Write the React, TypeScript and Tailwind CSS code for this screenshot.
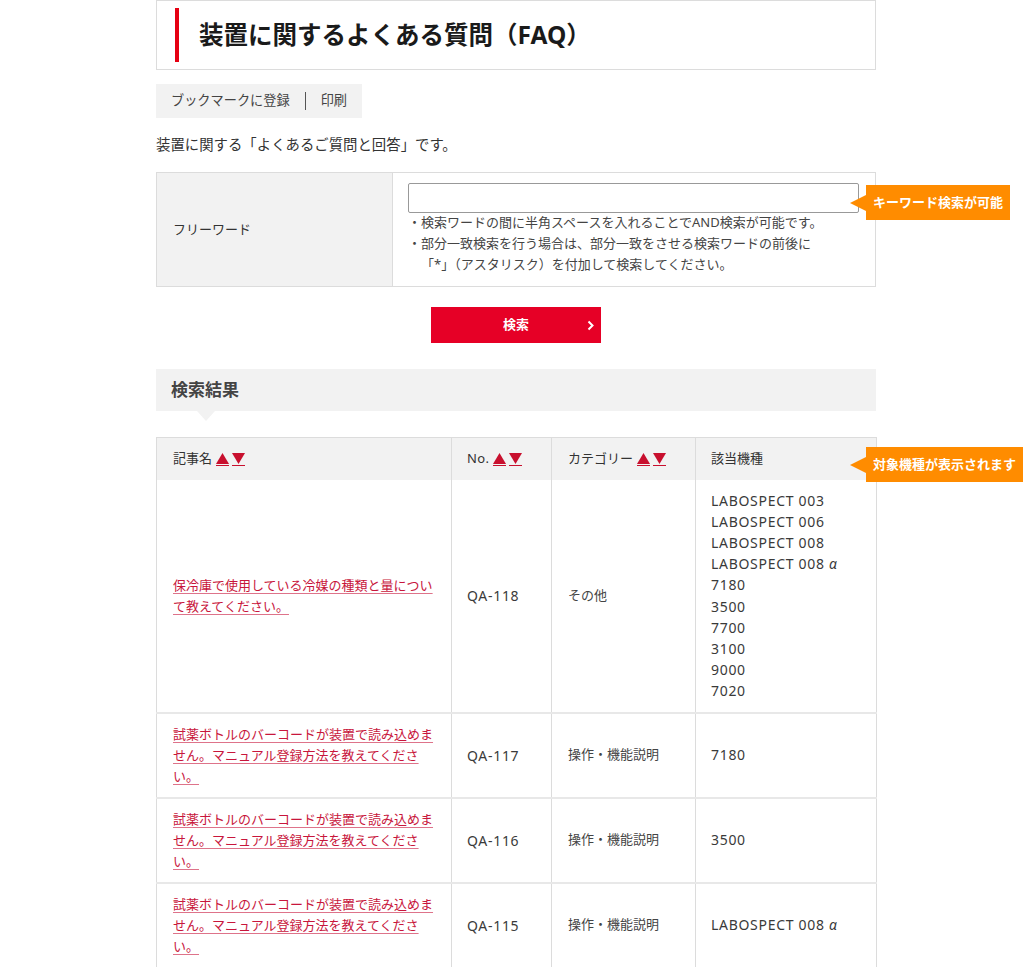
import React from 'react'

const rows = [
  {
    title: '保冷庫で使用している冷媒の種類と量について教えてください。',
    no: 'QA-118',
    category: 'その他',
    models: [
      'LABOSPECT 003',
      'LABOSPECT 006',
      'LABOSPECT 008',
      'LABOSPECT 008 α',
      '7180',
      '3500',
      '7700',
      '3100',
      '9000',
      '7020',
    ],
  },
  {
    title: '試薬ボトルのバーコードが装置で読み込めません。マニュアル登録方法を教えてください。',
    no: 'QA-117',
    category: '操作・機能説明',
    models: ['7180'],
  },
  {
    title: '試薬ボトルのバーコードが装置で読み込めません。マニュアル登録方法を教えてください。',
    no: 'QA-116',
    category: '操作・機能説明',
    models: ['3500'],
  },
  {
    title: '試薬ボトルのバーコードが装置で読み込めません。マニュアル登録方法を教えてください。',
    no: 'QA-115',
    category: '操作・機能説明',
    models: ['LABOSPECT 008 α'],
  },
]

function SortArrows() {
  return (
    <span className="ml-1 inline-flex items-end gap-[3px] align-middle">
      <a href="#" className="inline-flex flex-col items-center">
        <svg width="13" height="11" viewBox="0 0 13 11">
          <polygon points="6.5,0 13,11 0,11" fill="#c8102e" />
        </svg>
        <span className="mt-[1px] block h-[1px] w-[13px] bg-[#c8102e]" />
      </a>
      <a href="#" className="inline-flex flex-col items-center">
        <svg width="13" height="11" viewBox="0 0 13 11">
          <polygon points="0,0 13,0 6.5,11" fill="#c8102e" />
        </svg>
        <span className="mt-[1px] block h-[1px] w-[13px] bg-[#c8102e]" />
      </a>
    </span>
  )
}

function Callout({ text, className }: { text: string; className: string }) {
  return (
    <div className={`absolute flex items-center ${className}`}>
      <span className="h-0 w-0 border-y-[8px] border-r-[16px] border-y-transparent border-r-[#ff8c00]" />
      <span className="flex h-[35px] items-center whitespace-nowrap bg-[#ff8c00] px-[7px] text-[13px] font-bold text-white">
        {text}
      </span>
    </div>
  )
}

// model names: italic alpha like the original
function Model({ name }: { name: string }) {
  if (name.endsWith('α')) {
    return (
      <div>
        {name.slice(0, -1)}
        <span className="italic">α</span>
      </div>
    )
  }
  return <div>{name}</div>
}

function App() {
  return (
    <div
      className="min-h-[967px] bg-white text-[#333]"
      style={{ fontFamily: '"Noto Sans", "Noto Sans CJK JP", sans-serif' }}
    >
      <div className="relative mx-auto w-[720px]">
        {/* page title */}
        <div className="flex h-[70px] items-center border border-[#dcdcdc] pl-[18px]">
          <span className="h-[54px] w-[4px] bg-[#e60012]" />
          <h1 className="ml-[20px] text-[24.5px] font-bold leading-none text-[#1a1a1a]">
            装置に関するよくある質問（FAQ）
          </h1>
        </div>

        {/* utility links */}
        <div className="mt-[14px] inline-flex h-[34px] items-center bg-[#f2f2f2] px-[15px] text-[13.2px] text-[#444]">
          <a href="#">ブックマークに登録</a>
          <span className="mx-[15px] h-[18px] w-px bg-[#555]" />
          <a href="#">印刷</a>
        </div>

        <p className="mt-[17px] text-[14.4px] leading-[20px]">装置に関する「よくあるご質問と回答」です。</p>

        {/* search form */}
        <div className="mt-[17px] flex border border-[#dcdcdc]">
          <div className="flex w-[236px] items-center border-r border-[#dcdcdc] bg-[#f2f2f2] pl-[16px] text-[13px]">
            フリーワード
          </div>
          <div className="flex-1 pb-[11px] pl-[15px] pr-[16px] pt-[10px]">
            <input
              type="text"
              className="block h-[30px] w-full rounded-[2px] border border-[#999] px-2 text-[13px] outline-none"
            />
            <ul className="mt-[-1px] text-[13px] leading-[21px] text-[#444]">
              <li>・検索ワードの間に半角スペースを入れることでAND検索が可能です。</li>
              <li>・部分一致検索を行う場合は、部分一致をさせる検索ワードの前後に</li>
              <li className="pl-[1em]">「*」（アスタリスク）を付加して検索してください。</li>
            </ul>
          </div>
        </div>
        <Callout text="キーワード検索が可能" className="left-[694px] top-[185px]" />

        <div className="mt-[20px] flex justify-center">
          <button className="relative flex h-[36px] w-[170px] items-center justify-center bg-[#e60026] text-[13px] font-bold text-white">
            検索
            <svg className="absolute right-[7px] top-[13px]" width="7" height="11" viewBox="0 0 7 11">
              <polyline points="1.5,1.5 5.5,5.5 1.5,9.5" fill="none" stroke="#fff" strokeWidth="2" />
            </svg>
          </button>
        </div>

        {/* results heading */}
        <div className="relative mt-[26px] flex h-[42px] items-center bg-[#f2f2f2] pl-[15px]">
          <h2 className="text-[17px] font-bold text-[#444]">検索結果</h2>
          <span className="absolute left-[41px] top-[42px] h-0 w-0 border-x-[9px] border-t-[10px] border-x-transparent border-t-[#f2f2f2]" />
        </div>

        {/* results table */}
        <table className="mt-[26px] w-full table-fixed border-collapse border border-[#dcdcdc] text-[13px]">
          <colgroup>
            <col className="w-[295px]" />
            <col className="w-[100px]" />
            <col className="w-[144px]" />
            <col className="w-[181px]" />
          </colgroup>
          <thead>
            <tr className="h-[42px] bg-[#f2f2f2] text-left">
              <th className="border-r border-[#dcdcdc] pl-[16px] font-normal">
                記事名
                <SortArrows />
              </th>
              <th className="border-r border-[#dcdcdc] pl-[15px] font-normal tracking-[0.03em]">
                No.
                <SortArrows />
              </th>
              <th className="border-r border-[#dcdcdc] pl-[16px] font-normal">
                カテゴリー
                <SortArrows />
              </th>
              <th className="pl-[15px] font-normal">該当機種</th>
            </tr>
          </thead>
          <tbody>
            {rows.map((r) => (
              <tr key={r.no} className="border-t-2 border-[#e8e8e8] first:border-t-0">
                <td className="border-r border-[#dcdcdc] py-[10px] pl-[16px] pr-[14px] leading-[21px]">
                  <a
                    href="#"
                    className="text-[#c8163c] underline decoration-[#c8163c]/60 underline-offset-[3px]"
                  >
                    {r.title}
                  </a>
                </td>
                <td className="border-r border-[#dcdcdc] pl-[15px] text-[14px] tracking-[0.05em] text-[#3a3a3a]">
                  {r.no}
                </td>
                <td className="border-r border-[#dcdcdc] pl-[16px] text-[#444]">{r.category}</td>
                <td className="py-[10px] pl-[15px] text-[14px] leading-[21.2px] tracking-[0.05em] text-[#3a3a3a]">
                  {r.models.map((m) => (
                    <Model key={m} name={m} />
                  ))}
                </td>
              </tr>
            ))}
          </tbody>
        </table>
        <Callout text="対象機種が表示されます" className="left-[694px] top-[447px]" />
      </div>
    </div>
  )
}

export default App
